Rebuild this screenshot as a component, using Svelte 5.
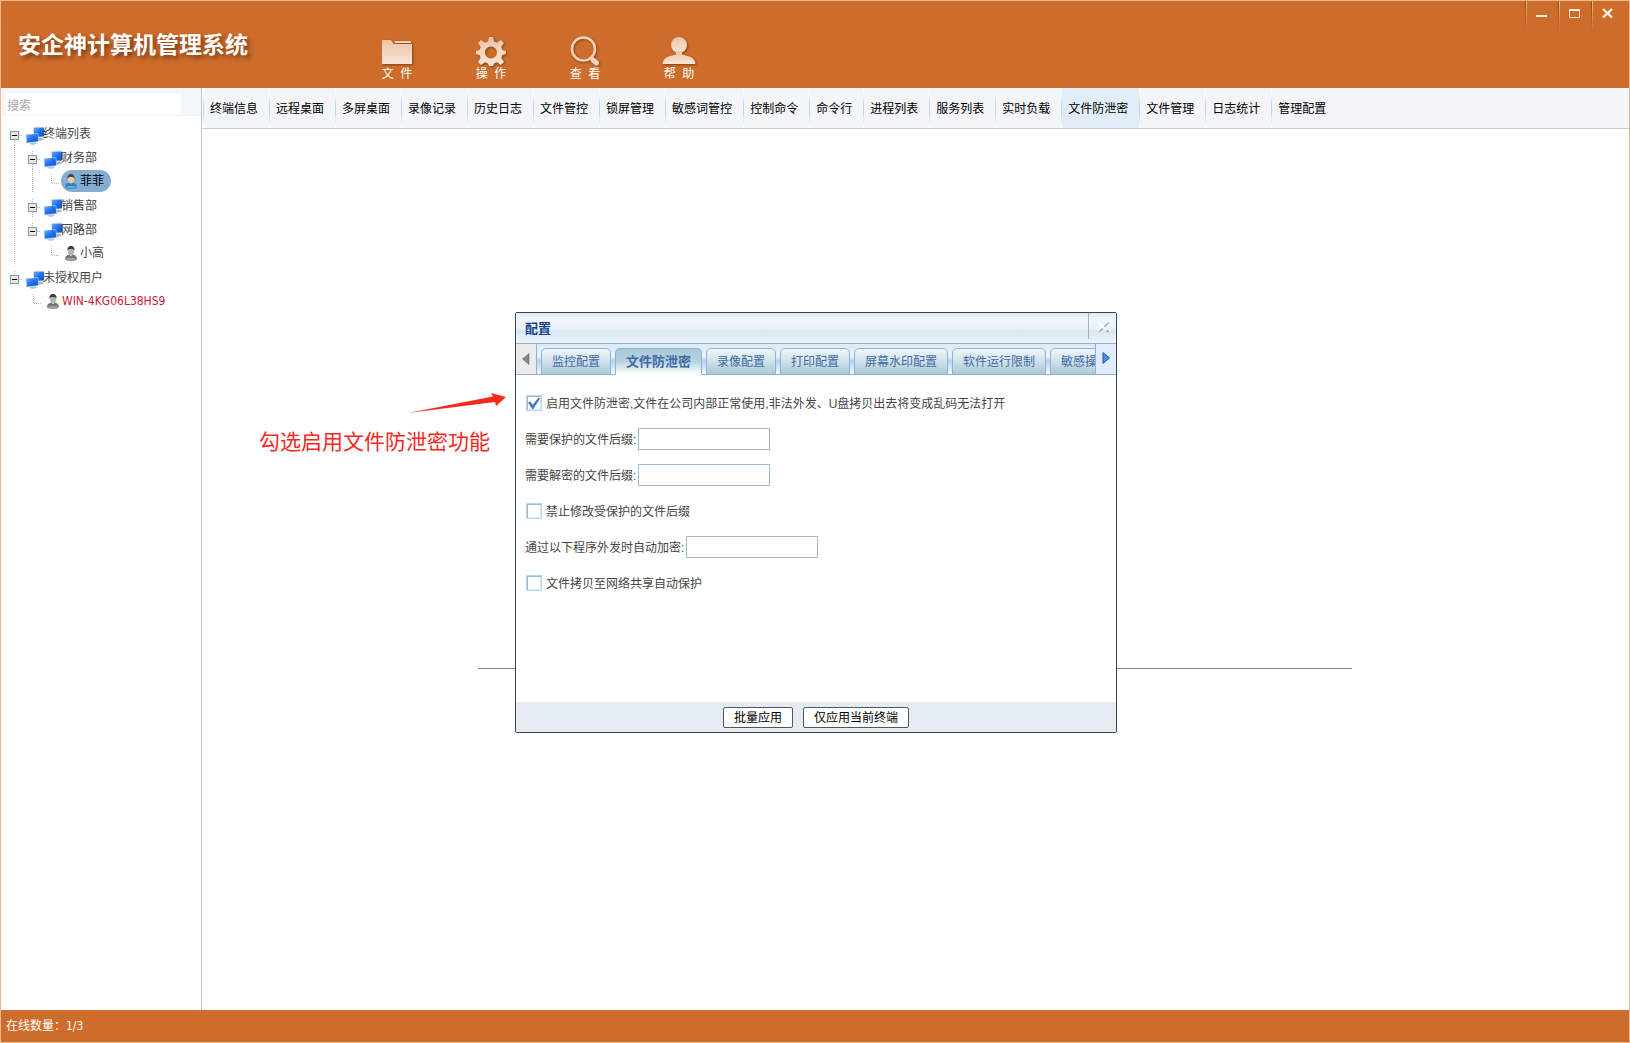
<script>
  const toolbar = [
    { label: "文\u00a0\u00a0件", icon: "folder" },
    { label: "操\u00a0\u00a0作", icon: "gear" },
    { label: "查\u00a0\u00a0看", icon: "search" },
    { label: "帮\u00a0\u00a0助", icon: "person" },
  ];

  const menu = [
    "终端信息", "远程桌面", "多屏桌面", "录像记录", "历史日志", "文件管控",
    "锁屏管理", "敏感词管控", "控制命令", "命令行", "进程列表", "服务列表",
    "实时负载", "文件防泄密", "文件管理", "日志统计", "管理配置",
  ];

  // guides: one entry per indent cell, the last one is the node's own joint
  const tree = [
    { name: "终端列表", type: "group", guides: ["first"] },
    { name: "财务部", type: "group", guides: ["line", "mid"] },
    { name: "菲菲", type: "user", guides: ["line", "line", "elbow"], online: true },
    { name: "销售部", type: "group", guides: ["line", "mid"] },
    { name: "网路部", type: "group", guides: ["line", "last"] },
    { name: "小高", type: "user", guides: ["line", "none", "elbow"] },
    { name: "未授权用户", type: "group", guides: ["last"] },
    { name: "WIN-4KG06L38HS9", type: "user", guides: ["none", "elbow"], denied: true },
  ];

  const tabs = ["监控配置", "文件防泄密", "录像配置", "打印配置", "屏幕水印配置", "软件运行限制", "敏感操作"];

  let activeMenu = $state("文件防泄密");
  let activeTab = $state("文件防泄密");
  let selected = $state("菲菲");
  let enabled = $state(true);
  let lockSuffix = $state(false);
  let protectShare = $state(false);
</script>

{#snippet userIcon(online)}
  <svg class="user-icon" width="12" height="15" viewBox="0 0 12 15">
    <path d="M0 13.2C0 10.4 2 9 4.2 8.6L6 10L7.8 8.6C10 9 12 10.4 12 13.2C10 15.2 2 15.2 0 13.2Z" fill={online ? "#2f87b8" : "#777"} />
    <path d="M0.6 13C2 11.6 10 11.6 11.4 13C9.5 14.5 2.5 14.5 0.6 13Z" fill={online ? "#5fb0dc" : "#a2a2a2"} />
    <ellipse cx="6" cy="5.2" rx="3" ry="3.9" fill={online ? "#f1c9a2" : "#b4b4b4"} />
    <path d="M2.6 5C2 1.5 3.8 0 6 0S10 1.5 9.4 5C9 3.4 8 3 6 3S3 3.4 2.6 5Z" fill={online ? "#5a4632" : "#3c3c3c"} />
  </svg>
{/snippet}

<div class="app">
  <header class="header">
    <h1 class="brand">安企神计算机管理系统</h1>
    <nav class="toolbar">
      {#each toolbar as item}
        <button class="tool" type="button">
          <svg class="tool-icon" width="34" height="30" viewBox="0 0 34 30" fill="url(#cream)">
            <defs>
              <linearGradient id="cream" x1="0" y1="0" x2="0" y2="1">
                <stop offset="0" stop-color="#edc4a8" />
                <stop offset="1" stop-color="#f8e4d6" />
              </linearGradient>
            </defs>
            {#if item.icon === "folder"}
              <path d="M2 4H11L14 8H32V28H2Z" />
              <path d="M14 5H31V7H15.5Z" />
            {:else if item.icon === "gear"}
              <path
                fill-rule="evenodd"
                d="M15 1H19L20 5.5L23 6.7L27 4L30 7L27.3 11L28.5 14L32 15V18L28.5 19L27.3 22L30 26L27 29L23 26.3L20 27.5L19 30H15L14 27.5L11 26.3L7 29L4 26L6.7 22L5.5 19L2 18V15L5.5 14L6.7 11L4 7L7 4L11 6.7L14 5.5ZM17 10.5A6 6 0 1 0 17 22.5A6 6 0 1 0 17 10.5Z"
              />
            {:else if item.icon === "search"}
              <circle cx="15.5" cy="13" r="11.5" fill="none" stroke="#f3d3bd" stroke-width="2.5" />
              <path d="M25 24L28.5 27" stroke="#f3d3bd" stroke-width="5" stroke-linecap="round" />
            {:else}
              <ellipse cx="17" cy="9" rx="8" ry="8" />
              <path d="M14 15H20V18.5C26 20 33 21 33.5 28H0.5C1 21 8 20 14 18.5Z" />
            {/if}
          </svg>
          <span>{item.label}</span>
        </button>
      {/each}
    </nav>
    <div class="window-controls">
      <button type="button" aria-label="最小化">
        <svg width="12" height="12" viewBox="0 0 12 12"><path d="M0 9H11" stroke="#fff6e6" stroke-width="2" /></svg>
      </button>
      <button type="button" aria-label="最大化">
        <svg width="12" height="12" viewBox="0 0 12 12" fill="none" stroke="#fff0d8">
          <path d="M0.5 2.5H10.5V10.5H0.5Z" />
          <path d="M0 3H11" stroke-width="2" />
        </svg>
      </button>
      <button type="button" aria-label="关闭">
        <svg width="12" height="12" viewBox="0 0 12 12"><path d="M1 2L10 10.5M10 2L1 10.5" stroke="#fff6e6" stroke-width="2.4" /></svg>
      </button>
    </div>
  </header>

  <div class="main">
    <aside class="sidebar">
      <div class="search">
        <input type="text" placeholder="搜索" aria-label="搜索" />
      </div>
      <ul class="tree">
        {#each tree as node}
          <li class="node">
            {#each node.guides as guide, i}
              <svg class="guide" width="18" height="24" viewBox="0 0 18 24" fill="none">
                <g stroke="#b4b4b4" stroke-dasharray="1 1">
                  {#if guide === "line"}
                    <path d="M9.5 0V24" />
                  {:else if guide === "elbow"}
                    <path d="M10.5 5V14.5M11 14.5H18" />
                  {:else if guide !== "none"}
                    <path d="M14 14.5H18" />
                    {#if guide !== "first"}<path d="M9.5 6V10" />{/if}
                    {#if guide !== "last"}<path d="M9.5 19V24" />{/if}
                  {/if}
                </g>
                {#if node.type === "group" && i === node.guides.length - 1}
                  <rect x="5.5" y="10.5" width="8" height="8" fill="#ece9e2" stroke="#7b98b8" />
                  <path d="M7 14.5H12" stroke="#000" />
                {/if}
              </svg>
            {/each}
            {#if node.type === "group"}
              <svg class="group-icon" width="18" height="18" viewBox="0 0 18 18">
                <defs>
                  <linearGradient id="screen" x1="0" y1="0" x2="1" y2="1">
                    <stop offset="0" stop-color="#6fb1fa" />
                    <stop offset="0.5" stop-color="#1f72ea" />
                    <stop offset="1" stop-color="#0a4fd0" />
                  </linearGradient>
                </defs>
                <path d="M12 11L16 10.5L18 12.5L13 14Z" fill="#a9b4c0" />
                <path d="M7.5 0.5H18V9.5L8 10Z" fill="url(#screen)" />
                <path d="M3 16.5L9 15L11 17L6 18Z" fill="#bcc5cf" />
                <path d="M0 7.5L12 6.5L12.5 14.5L0.5 16Z" fill="url(#screen)" stroke="#cfe2f8" stroke-width="0.5" />
              </svg>
              <span class="group-name">{node.name}</span>
            {:else}
              <button
                class="user"
                class:selected={selected === node.name}
                class:denied={node.denied}
                type="button"
                onclick={() => (selected = node.name)}
              >
                {@render userIcon(node.online)}
                <span>{node.name}</span>
              </button>
            {/if}
          </li>
        {/each}
      </ul>
    </aside>

    <section class="content">
      <nav class="menu">
        {#each menu as item}
          <button class="menu-item" class:active={activeMenu === item} type="button" onclick={() => (activeMenu = item)}>
            {item}
          </button>
        {/each}
      </nav>
      <div class="workspace">
        <div class="rule"></div>
      </div>
    </section>
  </div>

  <footer class="statusbar">在线数量：1/3</footer>

  <div class="overlay">
    <div class="dialog" role="dialog" aria-labelledby="dialog-title">
      <div class="callout">
        <svg width="100" height="24" viewBox="0 0 100 24">
          <path d="M0 20L85 3.5L83 0L98 4L88 13L87 9Z" fill="#fa2a1a" />
        </svg>
        <span>勾选启用文件防泄密功能</span>
      </div>

      <div class="titlebar">
        <h2 id="dialog-title">配置</h2>
        <button class="close" type="button" aria-label="关闭">
          <svg width="14" height="12" viewBox="0 0 14 12" fill="none">
            <path d="M3 11.5L12.5 2.5M8 8L11.5 11.5H13" stroke="#a0a9b4" stroke-width="2" />
            <path d="M1.5 1.5L10.5 10.5M11.5 1.5L2 10.5" stroke="#f8fafc" stroke-width="2" />
          </svg>
        </button>
      </div>

      <div class="tabbar">
        <button class="scroll left" type="button" aria-label="向左">
          <svg width="8" height="12" viewBox="0 0 8 12"><path d="M7 0.5V11.5L0.5 6Z" fill="#888" stroke="#555" stroke-width="0.5" /></svg>
        </button>
        <div class="tabs" role="tablist">
          {#each tabs as tab}
            <button
              class="tab"
              class:active={activeTab === tab}
              role="tab"
              aria-selected={activeTab === tab}
              type="button"
              onclick={() => (activeTab = tab)}
            >
              {tab}
            </button>
          {/each}
        </div>
        <button class="scroll right" type="button" aria-label="向右">
          <svg width="8" height="12" viewBox="0 0 8 12"><path d="M1 0.5V11.5L7.5 6Z" fill="#4b8de0" stroke="#2158b0" /></svg>
        </button>
      </div>

      <div class="form">
        <label class="row check">
          <input type="checkbox" bind:checked={enabled} />
          <span>启用文件防泄密,文件在公司内部正常使用,非法外发、U盘拷贝出去将变成乱码无法打开</span>
        </label>
        <div class="row">
          <label for="protect">需要保护的文件后缀:</label>
          <input id="protect" type="text" />
        </div>
        <div class="row">
          <label for="decrypt">需要解密的文件后缀:</label>
          <input id="decrypt" type="text" />
        </div>
        <label class="row check">
          <input type="checkbox" bind:checked={lockSuffix} />
          <span>禁止修改受保护的文件后缀</span>
        </label>
        <div class="row">
          <label for="programs">通过以下程序外发时自动加密:</label>
          <input id="programs" type="text" />
        </div>
        <label class="row check">
          <input type="checkbox" bind:checked={protectShare} />
          <span>文件拷贝至网络共享自动保护</span>
        </label>
      </div>

      <div class="actions">
        <button type="button">批量应用</button>
        <button type="button">仅应用当前终端</button>
      </div>
    </div>
  </div>
</div>

<style>
  .app {
    --orange: #cd6c2b;
    --line: #8fb2da;
    position: relative;
    display: flex;
    flex-direction: column;
    box-sizing: border-box;
    min-height: 100vh;
    border: 1px solid #efb98d;
    background: #fff;
    color: #444;
    font: 12px/16px "Liberation Sans", "Noto Sans CJK SC", sans-serif;
  }

  button,
  input {
    box-sizing: border-box;
    margin: 0;
    font: inherit;
  }

  button {
    padding: 0;
    border: 0;
    background: none;
    color: inherit;
    white-space: nowrap;
  }

  .header {
    display: flex;
    height: 87px;
    background: var(--orange);
  }

  .brand {
    width: 349px;
    margin: 0;
    padding: 27px 0 0 17px;
    box-sizing: border-box;
    color: #fff;
    font-size: 23px;
    font-weight: 700;
    line-height: 34px;
    white-space: nowrap;
    text-shadow: 3px 3px 4px rgba(80, 30, 0, 0.6);
  }

  .toolbar {
    display: flex;
    align-items: flex-start;
    padding-top: 35px;
  }

  .tool {
    display: flex;
    flex-direction: column;
    align-items: center;
    width: 94px;
    color: #fff;
  }

  .tool-icon {
    filter: drop-shadow(1px 1px 1px rgba(90, 40, 0, 0.6));
  }

  .window-controls {
    display: flex;
    margin-left: auto;
  }

  .window-controls button {
    width: 33px;
    height: 30px;
    padding-bottom: 2px;
    background:
      linear-gradient(#8a4a1c, var(--orange)) 0 0 / 1px 100% no-repeat,
      linear-gradient(#efb98d, var(--orange)) 1px 0 / 1px 100% no-repeat;
  }

  .window-controls button:last-child {
    width: 38px;
    padding-right: 5px;
  }

  .main {
    display: flex;
    flex: 1;
  }

  .sidebar {
    width: 200px;
    border-right: 1px solid #c4c4c4;
  }

  .search {
    padding: 5px 20px 0 5px;
    border-bottom: 1px solid #f0f2f5;
    background: #f3f6fb;
  }

  .search input {
    display: block;
    width: 100%;
    height: 22px;
    padding: 3px 1px 0;
    border: 0;
    background: #fff;
  }

  .search input::placeholder {
    color: #a8a8a8;
  }

  .tree {
    margin: 0;
    padding: 5px 0 0 4px;
    list-style: none;
  }

  .node {
    display: flex;
    align-items: center;
    height: 24px;
  }

  .group-icon {
    margin: 5px -1px 0 3px;
  }

  .group-name {
    padding-top: 2px;
    white-space: nowrap;
  }

  .user {
    display: flex;
    align-items: center;
    gap: 3px;
    height: 22px;
    margin-left: 2px;
    padding: 0 7px 0 4px;
    border-radius: 11px;
  }

  .user.selected {
    background: #83add3;
    color: #000;
  }

  .user.denied {
    color: #c8193c;
    font-family: "DejaVu Sans Condensed", "DejaVu Sans", sans-serif;
  }

  .content {
    display: flex;
    flex: 1;
    flex-direction: column;
    min-width: 0;
    padding-left: 1px;
  }

  .menu {
    display: flex;
    height: 40px;
    border-bottom: 1px solid #c9c9c9;
    background: #f3f5f9;
    overflow: hidden;
  }

  .menu-item {
    padding: 2px 11px 0 7px;
    background: linear-gradient(#fff, #fff 10%, #b4d7ea 45%, #b4d7ea 60%, #fff 95%) 0 0 / 1px 100% no-repeat;
    color: #000;
  }

  .menu-item.active {
    background-color: #e2ecf6;
  }

  .workspace {
    display: grid;
    flex: 1;
  }

  .rule {
    height: 1px;
    margin: 539px 277px 0 275px;
    background: #7c8a8a;
  }

  .statusbar {
    height: 32px;
    padding-left: 5px;
    background: var(--orange);
    color: #fff;
    font-family: "DejaVu Sans Condensed", "Noto Sans CJK SC", sans-serif;
    line-height: 33px;
  }

  .overlay {
    position: absolute;
    inset: 0;
    display: grid;
    place-items: center;
    padding: 2px 0 0 2px;
    pointer-events: none;
  }

  .dialog {
    position: relative;
    box-sizing: border-box;
    width: 602px;
    border: 1px solid #36474f;
    border-radius: 2px;
    background: #fff;
    pointer-events: auto;
  }

  .callout {
    position: absolute;
    top: 80px;
    right: calc(100% + 8px);
    display: flex;
    flex-direction: column;
    align-items: flex-end;
    color: #f5281e;
    font-size: 21px;
    line-height: 30px;
    white-space: nowrap;
  }

  .callout svg {
    margin-bottom: 10px;
  }

  .callout span {
    margin-right: 18px;
  }

  .titlebar {
    display: flex;
    justify-content: space-between;
    height: 30px;
    border-bottom: 1px solid var(--line);
    background: linear-gradient(#dceaf3, #f0f5fa 15%, #ecf2f8 50%, #dae6f1 60%, #edf5fb);
  }

  .titlebar h2 {
    margin: 0;
    padding-left: 9px;
    color: #15428b;
    font-size: 13px;
    line-height: 32px;
  }

  .close {
    width: 28px;
    height: 26px;
    padding-top: 4px;
    border-left: 1px solid #a9b2bb;
  }

  .tabbar {
    display: flex;
    height: 31px;
    background: linear-gradient(#dcebf5, #eaf3fa 40%, #b5d2ee 55%, #f2f8fd 95%);
  }

  .scroll {
    flex: none;
    border-bottom: 1px solid var(--line);
  }

  .scroll.left {
    width: 21px;
    padding-top: 4px;
    border-right: 1px solid var(--line);
    background: #ebebeb;
  }

  .scroll.right {
    width: 21px;
    padding-top: 2px;
    border-left: 1px solid var(--line);
    background: #deecfd;
  }

  .tabs {
    display: flex;
    flex: 1;
    align-items: flex-end;
    gap: 4px;
    min-width: 0;
    padding-left: 4px;
    overflow: hidden;
    box-shadow: inset 0 -1px var(--line);
  }

  .tab {
    flex: none;
    height: 27px;
    padding: 1px 10px 0;
    border: 1px solid var(--line);
    border-radius: 5px 5px 0 0;
    background: linear-gradient(#eef5fa, #d6e5ee 40%, #abc9d8);
    color: #416aa3;
  }

  .tab.active {
    border-bottom-color: #fff;
    background: linear-gradient(#a9c9da, #b7d2df 50%, #fff);
    font-size: 13px;
    font-weight: 700;
  }

  .form {
    display: flex;
    flex-direction: column;
    min-height: 327px;
    padding: 10px 9px 0;
    box-sizing: border-box;
  }

  .row {
    display: flex;
    align-items: center;
    gap: 2px;
    height: 36px;
    white-space: nowrap;
  }

  .row label,
  .row span {
    padding-top: 2px;
  }

  .row input[type="text"] {
    width: 132px;
    height: 22px;
    border: 1px solid #9fbad6;
    background: #fff;
  }

  .row.check {
    gap: 4px;
  }

  .check input {
    appearance: none;
    display: grid;
    place-items: center;
    width: 16px;
    height: 16px;
    margin-left: 1px;
    border: 1px solid #b5d8ea;
    background: #fff;
    box-shadow: inset 1px 1px #9fbad0, inset -1px -1px #d5eaf4;
  }

  .check input:checked::before {
    content: "";
    width: 12px;
    height: 12px;
    background: #3f78bd;
    clip-path: polygon(0 45%, 18% 38%, 40% 65%, 88% 5%, 100% 12%, 45% 100%, 35% 100%);
  }

  .actions {
    display: flex;
    justify-content: center;
    gap: 10px;
    padding: 5px 0 4px;
    background: #e3ebf3;
  }

  .actions button {
    height: 21px;
    padding: 0 10px;
    border: 1px solid #50585e;
    border-radius: 2px;
    background: #fff;
    color: #000;
  }
</style>
